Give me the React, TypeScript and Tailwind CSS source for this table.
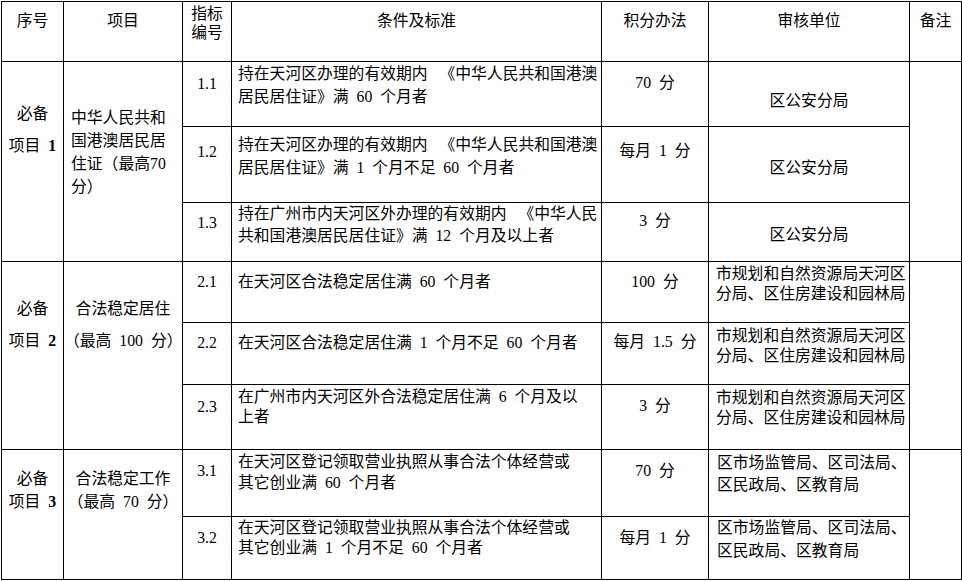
import React from "react";

const B = "border border-black align-top whitespace-pre";

function N({ children, b }: { children: React.ReactNode; b?: boolean }) {
  return <span className={b ? "font-bold" : ""}>{children}</span>;
}

export default function App() {
  return (
    <div className="w-[962px] h-[581px] bg-white pl-[1px] pt-[1px] font-['Liberation_Serif','Noto_Sans_CJK_SC',serif] text-[15.8px] text-black">
      <table className="table-fixed border-collapse w-[960px]">
        <colgroup>
          <col className="w-[62px]" />
          <col className="w-[119px]" />
          <col className="w-[49px]" />
          <col className="w-[370px]" />
          <col className="w-[107px]" />
          <col className="w-[201px]" />
          <col className="w-[52px]" />
        </colgroup>
        <tbody>
          <tr className="h-[60px]">
            <td className={`${B} text-center pt-[7px] leading-[23px]`}>序号</td>
            <td className={`${B} text-center pt-[7px] leading-[23px]`}>项目</td>
            <td className={`${B} text-center pt-[2px] leading-[19px]`}>指标{"\n"}编号</td>
            <td className={`${B} text-center pt-[7px] leading-[23px]`}>条件及标准</td>
            <td className={`${B} text-center pt-[7px] leading-[23px]`}>积分办法</td>
            <td className={`${B} text-center pt-[7px] leading-[23px]`}>审核单位</td>
            <td className={`${B} text-center pt-[7px] leading-[23px]`}>备注</td>
          </tr>

          {/* group 1 */}
          <tr className="h-[65px]">
            <td rowSpan={3} className={`${B} text-center pt-[36px] leading-[32px]`}>
              必备{"\n"}项目  <N b>1</N>
            </td>
            <td rowSpan={3} className={`${B} text-left pl-[7px] pt-[44px] leading-[23px]`}>
              中华人民共和{"\n"}国港澳居民居{"\n"}住证（最高<N>70</N>{"\n"}分）
            </td>
            <td className={`${B} text-center pt-[10px] leading-[23px]`}>1.1</td>
            <td className={`${B} pl-[6px] pt-[1px] leading-[22.5px]`}>
              持在天河区办理的有效期内{"\u2002 "}《中华人民共和国港澳{"\n"}居民居住证》满  60  个月者
            </td>
            <td className={`${B} text-center pt-[9px] leading-[23px]`}>70  分</td>
            <td className={`${B} text-center pt-[27px] leading-[23px]`}>区公安分局</td>
            <td rowSpan={3} className={B}></td>
          </tr>
          <tr className="h-[76px]">
            <td className={`${B} text-center pt-[13px] leading-[23px]`}>1.2</td>
            <td className={`${B} pl-[6px] pt-[6px] leading-[23.4px]`}>
              持在天河区办理的有效期内{"\u2002 "}《中华人民共和国港澳{"\n"}居民居住证》满  1  个月不足  60  个月者
            </td>
            <td className={`${B} text-center pt-[12px] leading-[23px]`}>每月  1  分</td>
            <td className={`${B} text-center pt-[29px] leading-[23px]`}>区公安分局</td>
          </tr>
          <tr className="h-[59px]">
            <td className={`${B} text-center pt-[8px] leading-[23px]`}>1.3</td>
            <td className={`${B} pl-[6px] pt-[0px] leading-[22px]`}>
              持在广州市内天河区外办理的有效期内{"\u2002 "}《中华人民{"\n"}共和国港澳居民居住证》满  12  个月及以上者
            </td>
            <td className={`${B} text-center pt-[6px] leading-[23px]`}>3  分</td>
            <td className={`${B} text-center pt-[20px] leading-[23px]`}>区公安分局</td>
          </tr>

          {/* group 2 */}
          <tr className="h-[61px]">
            <td rowSpan={3} className={`${B} text-center pt-[31px] leading-[32px]`}>
              必备{"\n"}项目  <N b>2</N>
            </td>
            <td rowSpan={3} className={`${B} text-center pt-[31px] leading-[32px]`}>
              合法稳定居住{"\n"}（最高  100  分）
            </td>
            <td className={`${B} text-center pt-[8px] leading-[23px]`}>2.1</td>
            <td className={`${B} pl-[6px] pt-[8px] leading-[23px]`}>
              在天河区合法稳定居住满  60  个月者
            </td>
            <td className={`${B} text-center pt-[8px] leading-[23px]`}>100  分</td>
            <td className={`${B} pl-[7px] pt-[2px] leading-[20px]`}>
              市规划和自然资源局天河区{"\n"}分局、区住房建设和园林局
            </td>
            <td rowSpan={3} className={B}></td>
          </tr>
          <tr className="h-[62px]">
            <td className={`${B} text-center pt-[8px] leading-[23px]`}>2.2</td>
            <td className={`${B} pl-[6px] pt-[8px] leading-[23px]`}>
              在天河区合法稳定居住满  1  个月不足  60  个月者
            </td>
            <td className={`${B} text-center pt-[7px] leading-[23px]`}>每月  1.5  分</td>
            <td className={`${B} pl-[7px] pt-[3px] leading-[20px]`}>
              市规划和自然资源局天河区{"\n"}分局、区住房建设和园林局
            </td>
          </tr>
          <tr className="h-[65px]">
            <td className={`${B} text-center pt-[10px] leading-[23px]`}>2.3</td>
            <td className={`${B} pl-[6px] pt-[2px] leading-[20px]`}>
              在广州市内天河区外合法稳定居住满  6  个月及以{"\n"}上者
            </td>
            <td className={`${B} text-center pt-[9px] leading-[23px]`}>3  分</td>
            <td className={`${B} pl-[7px] pt-[3px] leading-[20px]`}>
              市规划和自然资源局天河区{"\n"}分局、区住房建设和园林局
            </td>
          </tr>

          {/* group 3 */}
          <tr className="h-[67px]">
            <td rowSpan={2} className={`${B} text-center pt-[17px] leading-[23.4px]`}>
              必备{"\n"}项目  <N b>3</N>
            </td>
            <td rowSpan={2} className={`${B} text-center pt-[17px] leading-[23.4px]`}>
              合法稳定工作{"\n"}（最高  70  分）
            </td>
            <td className={`${B} text-center pt-[9px] leading-[23px]`}>3.1</td>
            <td className={`${B} pl-[6px] pt-[1px] leading-[21px]`}>
              在天河区登记领取营业执照从事合法个体经营或{"\n"}其它创业满  60  个月者
            </td>
            <td className={`${B} text-center pt-[9px] leading-[23px]`}>70  分</td>
            <td className={`${B} pl-[8px] pt-[2px] leading-[21.6px]`}>
              区市场监管局、区司法局、{"\n"}区民政局、区教育局
            </td>
            <td rowSpan={2} className={B}></td>
          </tr>
          <tr className="h-[63px]">
            <td className={`${B} text-center pt-[9px] leading-[23px]`}>3.2</td>
            <td className={`${B} pl-[6px] pt-[1px] leading-[20px]`}>
              在天河区登记领取营业执照从事合法个体经营或{"\n"}其它创业满  1  个月不足  60  个月者
            </td>
            <td className={`${B} text-center pt-[9px] leading-[23px]`}>每月  1  分</td>
            <td className={`${B} pl-[8px] pt-[0px] leading-[22.7px]`}>
              区市场监管局、区司法局、{"\n"}区民政局、区教育局
            </td>
          </tr>
        </tbody>
      </table>
    </div>
  );
}
